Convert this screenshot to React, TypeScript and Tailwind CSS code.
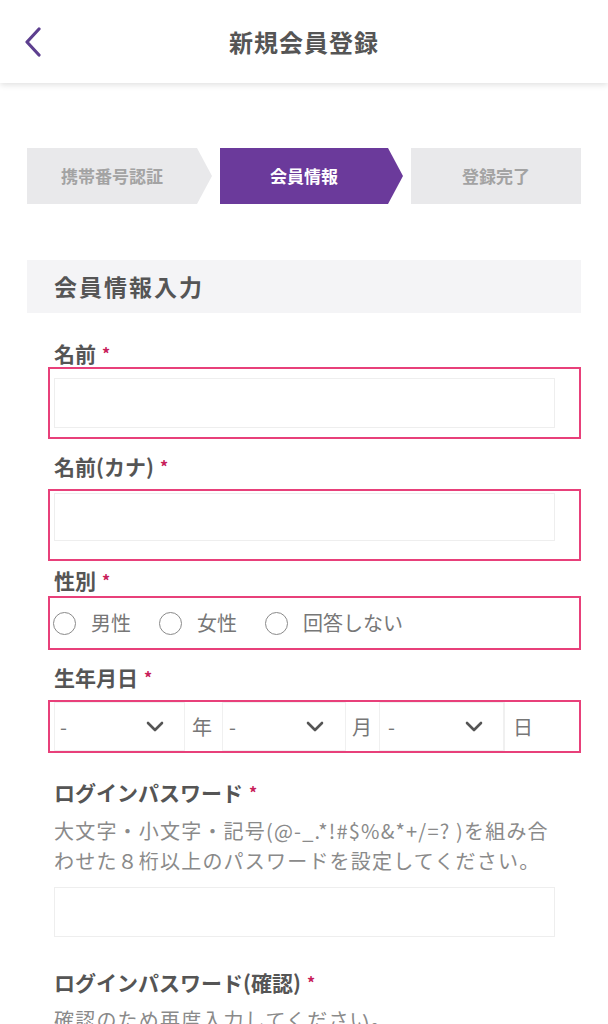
import React from "react";

const font = "font-[family-name:'Noto_Sans_CJK_JP','Noto_Sans',sans-serif]";

function Label({ text, className = "" }: { text: string; className?: string }) {
  return (
    <p className={`ml-[27px] text-[21px] leading-[24px] font-bold text-[#555] ${className}`}>
      {text}
      <span className="ml-[6px] text-[16px] text-[#c8205a] align-top">*</span>
    </p>
  );
}

function Chevron() {
  return (
    <svg width="18" height="11" viewBox="0 0 18 11" fill="none">
      <polyline points="2 2 9 9 16 2" stroke="#555" strokeWidth="2.6" strokeLinecap="round" strokeLinejoin="round" />
    </svg>
  );
}

function Radio({ text }: { text: string }) {
  return (
    <label className="flex items-center">
      <span className="w-[23px] h-[23px] rounded-full border-[1.5px] border-[#8a8a8a] bg-white" />
      <span className="ml-[15px] text-[20px] leading-none text-[#777]">{text}</span>
    </label>
  );
}

export default function App() {
  return (
    <div className={`min-h-screen bg-white ${font}`}>
      {/* Header */}
      <header className="h-[83px] bg-white shadow-[0_2px_6px_rgba(0,0,0,0.12)] relative flex items-center justify-center">
        <button className="absolute left-[24px] top-[27px]">
          <svg width="18" height="30" viewBox="0 0 18 30" fill="none">
            <polyline points="15 2 3 15 15 28" stroke="#5d3f8f" strokeWidth="3.2" strokeLinecap="round" strokeLinejoin="round" />
          </svg>
        </button>
        <h1 className="text-[24px] font-bold text-[#555] tracking-[1px]">新規会員登録</h1>
      </header>

      <main className="px-[27px] pb-10">
        {/* Steps */}
        <div className="mt-[65px] flex gap-2 h-[56px]">
          <div className="w-[185px] bg-[#e9e9eb] pr-[15px] flex items-center justify-center [clip-path:polygon(0_0,calc(100%_-_15px)_0,100%_50%,calc(100%_-_15px)_100%,0_100%)]">
            <span className="text-[17px] font-bold text-[#a3a3a3]">携帯番号認証</span>
          </div>
          <div className="w-[183px] bg-[#6b3a9b] pr-[15px] flex items-center justify-center [clip-path:polygon(0_0,calc(100%_-_15px)_0,100%_50%,calc(100%_-_15px)_100%,0_100%)]">
            <span className="text-[17px] font-bold text-white">会員情報</span>
          </div>
          <div className="flex-1 bg-[#e9e9eb] flex items-center justify-center">
            <span className="text-[17px] font-bold text-[#a3a3a3]">登録完了</span>
          </div>
        </div>

        {/* Section header */}
        <div className="mt-[56px] h-[53px] bg-[#f4f4f6] flex items-center pl-[27px]">
          <h2 className="text-[23px] font-bold text-[#555] tracking-[2px]">会員情報入力</h2>
        </div>

        {/* 名前 */}
        <Label text="名前" className="mt-[28px]" />
        <div className="mt-[2px] ml-[21px] border-2 border-[#e8407a] pl-[4px] py-[9px]">
          <input className="block w-[501px] h-[50px] border border-[#eeeeee] bg-white outline-none" />
        </div>

        {/* 名前(カナ) */}
        <Label text="名前(カナ)" className="mt-[15px]" />
        <div className="mt-[11px] ml-[21px] border-2 border-[#e8407a] pl-[4px] pt-[2px] pb-[18px]">
          <input className="block w-[501px] h-[48px] border border-[#eeeeee] bg-white outline-none" />
        </div>

        {/* 性別 */}
        <Label text="性別" className="mt-[7px]" />
        <div className="mt-[4px] ml-[21px] h-[54px] border-2 border-[#e8407a] pl-[3px] flex items-center gap-[28px]">
          <Radio text="男性" />
          <Radio text="女性" />
          <Radio text="回答しない" />
        </div>

        {/* 生年月日 */}
        <Label text="生年月日" className="mt-[15px]" />
        <div className="mt-[11px] ml-[21px] h-[53px] border-2 border-[#e8407a] pl-[4px] flex items-stretch text-[20px] text-[#777]">
          <div className="w-[131px] flex items-center justify-between pl-[5px] pr-[20px] border border-[#f0f0f0]">
            <span>-</span>
            <Chevron />
          </div>
          <div className="w-[37px] flex items-center pl-[7px]">年</div>
          <div className="w-[124px] flex items-center justify-between pl-[6px] pr-[21px] border border-[#f0f0f0]">
            <span>-</span>
            <Chevron />
          </div>
          <div className="w-[33px] flex items-center pl-[6px]">月</div>
          <div className="w-[125px] flex items-center justify-between pl-[8px] pr-[20px] border border-[#f0f0f0]">
            <span>-</span>
            <Chevron />
          </div>
          <div className="w-[46px] flex items-center pl-[8px] border-l border-[#f0f0f0]">日</div>
        </div>

        {/* ログインパスワード */}
        <Label text="ログインパスワード" className="mt-[27px]" />
        <p className="ml-[27px] mt-[12px] text-[20px] leading-[30px] tracking-[1.2px] text-[#8a8a8a] whitespace-nowrap">
          大文字・小文字・記号(@-_.*!#$%&*+/=? )を組み合
          <br />
          わせた８桁以上のパスワードを設定してください。
        </p>
        <input
          type="password"
          className="block mt-[11px] ml-[27px] w-[501px] h-[50px] border border-[#eeeeee] bg-white outline-none"
        />

        {/* ログインパスワード(確認) */}
        <Label text="ログインパスワード(確認)" className="mt-[33px]" />
        <p className="ml-[27px] mt-[11px] text-[20px] leading-[30px] tracking-[1.2px] text-[#8a8a8a]">
          確認のため再度入力してください。
        </p>
        <input
          type="password"
          className="block mt-[11px] ml-[27px] w-[501px] h-[50px] border border-[#eeeeee] bg-white outline-none"
        />
      </main>
    </div>
  );
}
